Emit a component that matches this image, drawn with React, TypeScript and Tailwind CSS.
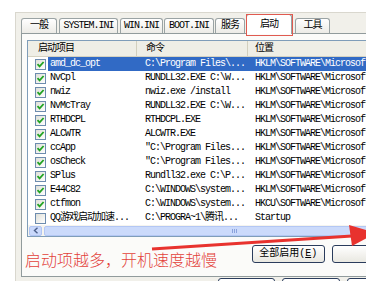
import React from 'react';

type Row = { name: string; cmd: string; loc: string; on: boolean; sel?: boolean };

const rows: Row[] = [
  { name: 'amd_dc_opt', cmd: 'C:\\Program Files\\...', loc: 'HKLM\\SOFTWARE\\Microsoft', on: true, sel: true },
  { name: 'NvCpl', cmd: 'RUNDLL32.EXE C:\\W...', loc: 'HKLM\\SOFTWARE\\Microsoft', on: true },
  { name: 'nwiz', cmd: 'nwiz.exe /install', loc: 'HKLM\\SOFTWARE\\Microsoft', on: true },
  { name: 'NvMcTray', cmd: 'RUNDLL32.EXE C:\\W...', loc: 'HKLM\\SOFTWARE\\Microsoft', on: true },
  { name: 'RTHDCPL', cmd: 'RTHDCPL.EXE', loc: 'HKLM\\SOFTWARE\\Microsoft', on: true },
  { name: 'ALCWTR', cmd: 'ALCWTR.EXE', loc: 'HKLM\\SOFTWARE\\Microsoft', on: true },
  { name: 'ccApp', cmd: '"C:\\Program Files...', loc: 'HKLM\\SOFTWARE\\Microsoft', on: true },
  { name: 'osCheck', cmd: '"C:\\Program Files...', loc: 'HKLM\\SOFTWARE\\Microsoft', on: true },
  { name: 'SPlus', cmd: 'Rundll32.exe C:\\P...', loc: 'HKLM\\SOFTWARE\\Microsoft', on: true },
  { name: 'E44C82', cmd: 'C:\\WINDOWS\\system...', loc: 'HKLM\\SOFTWARE\\Microsoft', on: true },
  { name: 'ctfmon', cmd: 'C:\\WINDOWS\\system...', loc: 'HKCU\\SOFTWARE\\Microsoft', on: true },
  { name: 'QQ游戏启动加速...', cmd: 'C:\\PROGRA~1\\腾讯...', loc: 'Startup', on: false },
];

const tabs = [
  { label: '一般', cls: 'w-[36px]' },
  { label: 'SYSTEM.INI', cls: 'ml-[2px] w-[59px]' },
  { label: 'WIN.INI', cls: 'ml-[2px] w-[43px]' },
  { label: 'BOOT.INI', cls: 'ml-[1px] w-[50px]' },
  { label: '服务', cls: 'ml-[1px] w-[30px]' },
];

const CheckBox = ({ on }: { on: boolean }) => (
  <span className="flex h-[11px] w-[11px] items-center justify-center border border-[#6d8cae] bg-gradient-to-br from-[#dedfd8] to-white">
    {on && (
      <svg width="9" height="9" viewBox="0 0 9 9">
        <path d="M1.5 4.2 L3.6 6.4 L7.6 2" fill="none" stroke="#22a322" strokeWidth="1.8" />
      </svg>
    )}
  </span>
);

const Tab = ({ label, cls }: { label: string; cls: string }) => (
  <div
    className={`${cls} flex h-[15px] items-center justify-center rounded-t-[3px] border border-b-0 border-[#9aa3a4] bg-gradient-to-b from-white to-[#ecebe6]`}
  >
    {label}
  </div>
);

export default function App() {
  return (
    <div className="relative h-[281px] w-[366px] overflow-hidden bg-white font-['Liberation_Mono','Noto_Sans_CJK_SC',monospace] text-[10px] leading-[14px] tracking-[-1px] text-black">
      <div className="ml-[15px] mt-[12px] h-[290px] w-[390px] border-l border-t border-[#d9d7ce] bg-[#f1f0ea] pl-[5px] pt-[1px]">
        {/* tabs */}
        <div className="flex h-[19px] items-end">
          {tabs.map((t) => (
            <Tab key={t.label} label={t.label} cls={t.cls} />
          ))}
          <div className="relative z-10 mb-[-1px] ml-[1px] flex h-[20px] w-[46px] items-center justify-center rounded-t-[3px] border border-b-0 border-[#9aa3a4] bg-white">
            启动
            <div className="absolute left-[-1px] top-[-1px] h-[22px] w-[47px] border border-[#e05a50]" />
          </div>
          <div className="ml-[3px] flex h-[15px] w-[35px] items-center justify-center rounded-t-[3px] border border-b-0 border-[#9aa3a4] bg-gradient-to-b from-white to-[#ecebe6]">
            工具
          </div>
        </div>

        {/* tab page */}
        <div className="h-[244px] w-[384px] border border-[#919b9c] bg-[#fbfbf9] pl-[5px] pt-[6px]">
          <div className="w-[400px] border border-[#7f9db9] bg-white">
            <div className="flex h-[16px] items-center border-b border-[#d5d2c1] bg-[#efeee6]">
              <div className="h-full w-[109px] border-r border-[#d2cfbe] pl-[10px] leading-[16px]">启动项目</div>
              <div className="h-full w-[111px] border-r border-[#d2cfbe] pl-[9px] leading-[16px]">命令</div>
              <div className="h-full pl-[7px] leading-[16px]">位置</div>
            </div>
            {rows.map((r) => (
              <div key={r.name} className="flex h-[14px] items-center">
                <div className="flex w-[20px] pl-[7px]">
                  <CheckBox on={r.on} />
                </div>
                <div className={`flex h-full flex-1 items-center whitespace-nowrap ${r.sel ? 'bg-[#316ac5] text-white' : ''}`}>
                  <div className="w-[89px] pl-[2px]">{r.name}</div>
                  <div className="w-[111px] pl-[8px]">{r.cmd}</div>
                  <div className="pl-[7px]">{r.loc}</div>
                </div>
              </div>
            ))}
            {/* horizontal scrollbar */}
            <div className="flex h-[11px] items-center bg-[#f5f4ef]">
              <div className="ml-[1px] flex h-[10px] w-[13px] items-center justify-center rounded-[2px] border border-[#b1c5f3] bg-[#c9d8fb]">
                <svg width="6" height="7" viewBox="0 0 6 7">
                  <path d="M4.5 0.8 L1.5 3.5 L4.5 6.2" fill="none" stroke="#4b5f8a" strokeWidth="1.4" />
                </svg>
              </div>
              <div className="ml-[2px] flex h-[10px] w-[380px] items-center rounded-[2px] border border-[#b3c7f4] bg-[#cbdafb] pl-[187px]">
                <div className="flex gap-[1px]">
                  <span className="h-[4px] w-[1px] bg-[#8aa2dc]" />
                  <span className="h-[4px] w-[1px] bg-[#8aa2dc]" />
                  <span className="h-[4px] w-[1px] bg-[#8aa2dc]" />
                </div>
              </div>
            </div>
          </div>

          <div className="mt-[8px] flex gap-[7px] pl-[225px]">
            <div className="flex h-[18px] w-[104px] items-center justify-center rounded-[3px] border border-[#2a3c5c] bg-gradient-to-b from-white to-[#e9e8e1] tracking-[0px]">
              全部启用(<span className="underline">E</span>)
            </div>
            <div className="h-[18px] w-[104px] rounded-[3px] border border-[#2a3c5c] bg-gradient-to-b from-white to-[#e9e8e1]" />
          </div>
        </div>

        {/* dialog buttons */}
        <div className="mt-[1px] flex gap-[7px] pl-[197px]">
          <div className="h-[20px] w-[60px] rounded-[3px] border border-[#2a3c5c] bg-white" />
          <div className="h-[20px] w-[61px] rounded-[3px] border border-[#2a3c5c] bg-white" />
          <div className="h-[20px] w-[61px] rounded-[3px] border border-[#2a3c5c] bg-white" />
        </div>
      </div>

      {/* annotations */}
      <div className="absolute left-[25px] top-[248px] font-['Noto_Sans_CJK_SC',sans-serif] text-[16px] font-light leading-[22px] tracking-[0px] text-[#e3423a]">
        启动项越多，开机速度越慢
      </div>
      <svg className="pointer-events-none absolute left-0 top-0" width="366" height="281">
        <line x1="152" y1="249" x2="352" y2="236" stroke="#e8322e" strokeWidth="3" />
        <polygon points="349,225 352,246 376,233" fill="#e8322e" />
      </svg>
    </div>
  );
}
